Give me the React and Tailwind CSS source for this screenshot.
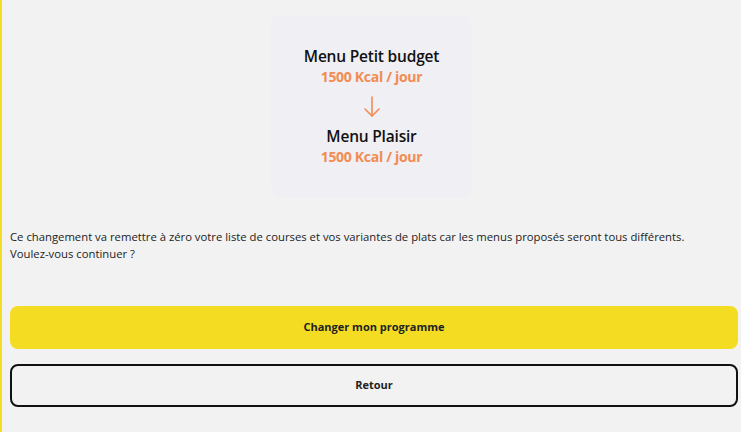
export default function App() {
  const font = { fontFamily: '"Open Sans", "Liberation Sans", sans-serif' };
  return (
    <div className="h-[432px] w-[741px] overflow-hidden bg-[#f2f2f2] border-l-2 border-[#f4dc22] text-[#111]" style={font}>
      <div className="flex justify-center pt-[15px]">
        <div className="w-[201px] h-[183px] rounded-[10px] bg-[#f0eff4] flex flex-col items-center pt-[31px]">
          <div className="text-[15.5px] font-semibold leading-[21px] tracking-[-0.2px]">Menu Petit budget</div>
          <div className="text-[14px] font-bold leading-[19px] text-[#f28c52] tracking-[-0.3px]">1500 Kcal / jour</div>
          <svg className="mt-[10px]" width="18" height="21" viewBox="0 0 18 21" fill="none" stroke="#f28c52" strokeWidth="1.6" strokeLinecap="round" strokeLinejoin="round">
            <path d="M9 1v19" />
            <path d="M2 13l7 7 7-7" />
          </svg>
          <div className="mt-[9px] text-[15.5px] font-semibold leading-[21px] tracking-[-0.2px]">Menu Plaisir</div>
          <div className="text-[14px] font-bold leading-[19px] text-[#f28c52] tracking-[-0.3px]">1500 Kcal / jour</div>
        </div>
      </div>
      <div className="px-[8px] mt-[30px] text-[11.3px] leading-[17px] text-[#222]">
        <p>Ce changement va remettre à zéro votre liste de courses et vos variantes de plats car les menus proposés seront tous différents.</p>
        <p>Voulez-vous continuer ?</p>
      </div>
      <div className="px-[8px] pr-[3px] mt-[44px] flex flex-col gap-[15px]">
        <button className="h-[43px] w-full rounded-[8px] bg-[#f4dc22] text-[11px] font-bold text-[#222]">Changer mon programme</button>
        <button className="h-[43px] w-full rounded-[8px] border-2 border-[#111] bg-transparent text-[11px] font-bold text-[#222]">Retour</button>
      </div>
    </div>
  );
}
